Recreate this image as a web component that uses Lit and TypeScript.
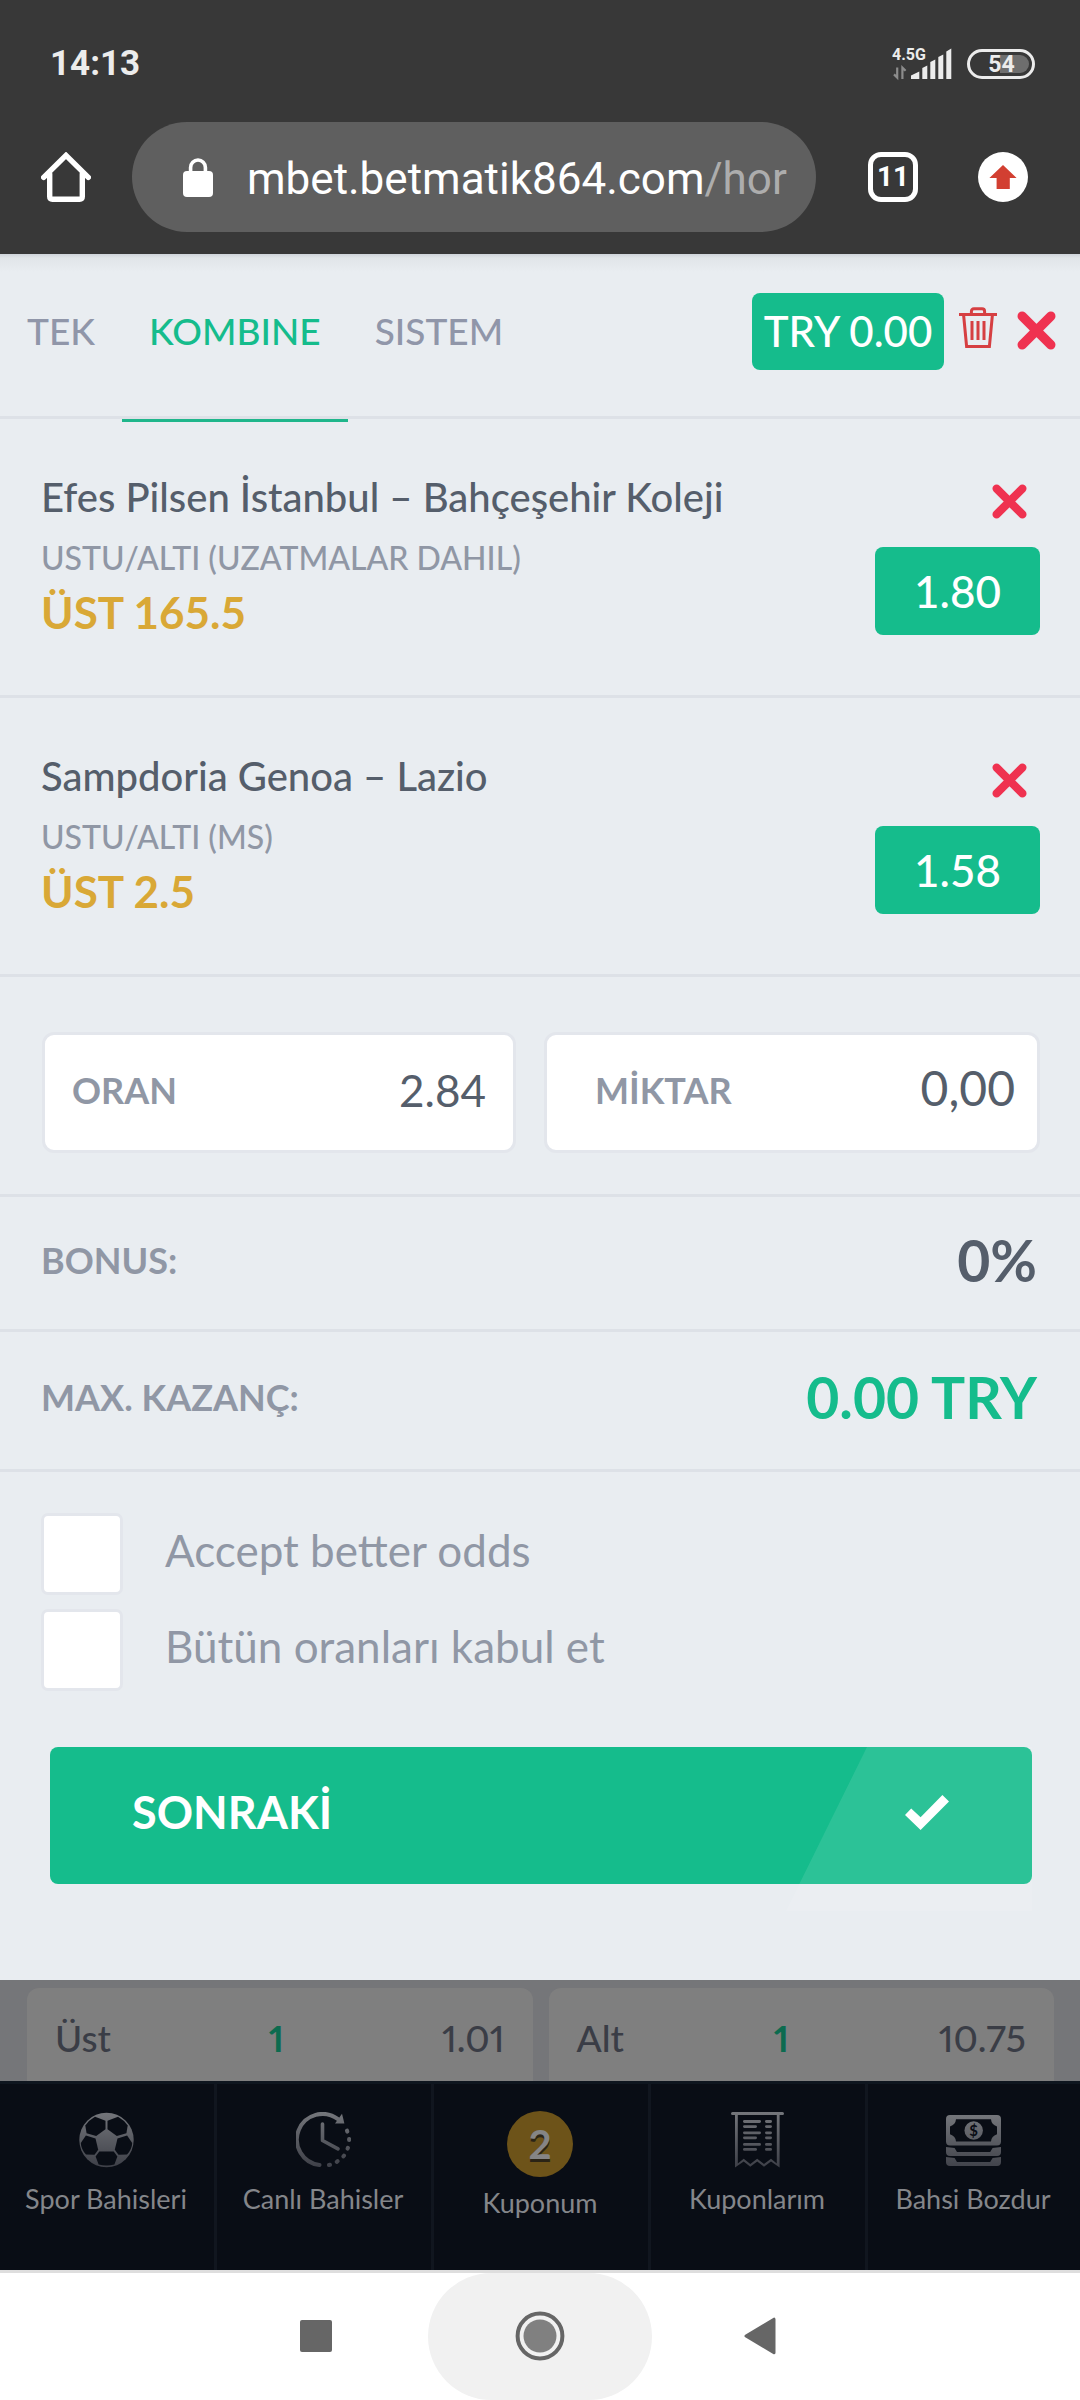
import { LitElement, html, svg, css } from "lit";
import { customElement, property, state } from "lit/decorators.js";

interface Selection {
  match: string;
  market: string;
  pick: string;
  odds: string;
}

const SELECTIONS: Selection[] = [
  {
    match: "Efes Pilsen İstanbul – Bahçeşehir Koleji",
    market: "USTU/ALTI (UZATMALAR DAHIL)",
    pick: "ÜST 165.5",
    odds: "1.80",
  },
  {
    match: "Sampdoria Genoa – Lazio",
    market: "USTU/ALTI (MS)",
    pick: "ÜST 2.5",
    odds: "1.58",
  },
];

const cross = (size: number) => html`<svg width=${size} height=${size} viewBox="0 0 38 38" aria-hidden="true">
  <path d="M5 5 L33 33 M33 5 L5 33" fill="none" stroke="#ef3250" stroke-width="9" stroke-linecap="round" />
</svg>`;

const fade = (id: string) => svg`<linearGradient id=${id} x1="0" y1="0" x2="0" y2="55" gradientUnits="userSpaceOnUse">
  <stop offset="0" stop-color="#74767b" />
  <stop offset="1" stop-color="#3e4048" />
</linearGradient>`;

const ballIcon = html`<svg width="55" height="56" viewBox="0 0 55 56" aria-hidden="true">
  <defs>${fade("ball")}</defs>
  <circle cx="27.5" cy="28" r="27.2" fill="url(#ball)" />
  <g fill="#090d15">
    <path d="M26.5 8.7V17.3L17.2 24L7.6 21.3L6.3 13.6Q10 8 16 4.8Z" />
    <path d="M28.5 8.7V17.3L37.8 24L47.4 21.3L48.7 13.6Q45 8 39 4.8Z" />
    <path d="M6.9 23.6L16.5 26.6L19.2 37.7L15.5 42.7L7 42.6Q2 37 1.8 31Z" />
    <path d="M48.1 23.6L38.5 26.6L35.8 37.7L39.5 42.7L48 42.6Q53 37 53.2 31Z" />
    <path d="M20.3 39.6H34.7L38.4 44.6L35.4 52.6Q27.5 54.6 19.6 52.6L16.6 44.6Z" />
  </g>
</svg>`;

const liveIcon = html`<svg width="55" height="56" viewBox="0 0 55 56" aria-hidden="true">
  <defs>${fade("live")}</defs>
  <g fill="none" stroke="url(#live)" stroke-linecap="round" stroke-linejoin="round">
    <path d="M23.5 53A25.6 25.6 0 1 1 42 7.2" stroke-width="4" />
    <path d="M26.5 12V28.5L42 36.8" stroke-width="3.6" />
    <path d="M51 18.6L51.3 19.6M53.1 27V28M51.9 35.8L51.6 36.6M48 43.6L47.4 44.4M41.6 49.2L40.8 49.8M34 52.8L33 53" stroke-width="4" />
  </g>
  <path d="M39 11.4L48.4 11.4L46 1.8Z" fill="url(#live)" />
</svg>`;

const receiptIcon = html`<svg width="53" height="56" viewBox="0 0 53 56" aria-hidden="true">
  <defs>${fade("receipt")}</defs>
  <g fill="url(#receipt)">
    <rect x="0" y="0" width="53" height="3" rx="1.5" />
    <path d="M4 2H6.8V51.4L12.7 46.8L19.3 51.9L26.2 46.8L33 51.9L40 46.8L45.8 51.4V2H48.6V55.6L40 49.4L33 54.8L26.2 49.4L19.3 54.8L12.7 49.4L4 55.6Z" />
    ${[9.5, 14.6, 20.8, 25.8, 32.4, 37.4].map(
      (y, i) => svg`<rect x="12" y=${y - 1.4} width=${i % 2 ? 14 : 18} height="2.8" rx="1.4" />
        <rect x="34" y=${y - 1.4} width="7" height="2.8" rx="1.4" />`,
    )}
  </g>
</svg>`;

const moneyIcon = html`<svg width="55" height="56" viewBox="0 -3 55 56" aria-hidden="true">
  <defs>${fade("money")}</defs>
  <g fill="url(#money)">
    <path fill-rule="evenodd" d="M4 0H51Q55 0 55 4V26.6Q55 30.6 51 30.6H4Q0 30.6 0 26.6V4Q0 0 4 0ZM10 4.3Q9.6 9.6 4 11.4V19.2Q9.6 21 10 26.4H45Q45.4 21 51 19.2V11.4Q45.4 9.6 45 4.3Z" />
    <circle cx="27.7" cy="15.5" r="9.2" />
    <path d="M0 32L8.6 33L11 37H44.2L46.6 33L55 32V37Q55 41 51 41H4Q0 41 0 37Z" />
    <path d="M0 42L8.6 43L11 47H44.2L46.6 43L55 42V47Q55 51 51 51H4Q0 51 0 47Z" />
  </g>
  <text x="27.7" y="21" text-anchor="middle" fill="#090d15" font-family="Lato, sans-serif" font-weight="700" font-size="15">$</text>
</svg>`;

@customElement("phone-header")
export class PhoneHeader extends LitElement {
  static styles = css`
    :host {
      display: block;
      background: #383838;
      color: #fff;
      font-family: Roboto, sans-serif;
    }
    .status {
      display: flex;
      align-items: center;
      justify-content: space-between;
      height: 122px;
      padding: 5px 45px 0 50px;
      box-sizing: border-box;
      color: #ececec;
    }
    .time {
      font-size: 35px;
      line-height: 40px;
      font-weight: 700;
    }
    .indicators {
      display: flex;
      align-items: center;
      gap: 15px;
    }
    .toolbar {
      display: flex;
      align-items: center;
      padding: 0 52px 22px 41px;
    }
    button {
      display: flex;
      align-items: center;
      padding: 0;
      border: 0;
      background: none;
      color: inherit;
      font: inherit;
    }
    .address {
      flex: 1;
      min-width: 0;
      height: 110px;
      margin: 0 52px 0 41px;
      padding: 0 24px 0 51px;
      border-radius: 55px;
      background: #5f5f5f;
      gap: 34px;
    }
    .url {
      overflow: hidden;
      padding-top: 3px;
      white-space: nowrap;
      font-size: 44px;
      line-height: 52px;
    }
    .path {
      color: #adadad;
    }
    .count {
      justify-content: center;
      box-sizing: border-box;
      width: 50px;
      height: 50px;
      margin-right: 60px;
      border: 5px solid #fff;
      border-radius: 13px;
      font-size: 28px;
      line-height: 32px;
      font-weight: 700;
    }
  `;

  render() {
    return html`
      <div class="status">
        <span class="time">14:13</span>
        <div class="indicators">
          <svg width="60" height="44" viewBox="0 -6 60 44" role="img" aria-label="Sinyal">
            <text x="0" y="12" fill="#ececec" font-family="Roboto, sans-serif" font-weight="700" font-size="16">4.5G</text>
            <path d="M19 31V27.6L27.3 23.4V31ZM30.3 31V20L35.3 17.6V31ZM38.3 31V14L43.3 11.6V31ZM46.3 31V9L51.3 6.6V31ZM54.3 31V3.4L59.3 .6V31Z" fill="#ececec" />
            <path d="M2 26.4L5.2 29.6V19.4M13.6 22.8L10.4 19.6V31" fill="none" stroke="#8c8c8c" stroke-width="2.2" />
          </svg>
          <svg width="68" height="32" viewBox="0 0 68 32" role="img" aria-label="Pil">
            <path d="M33 7H53A9 9 0 0 1 53 25H33Z" fill="#6e6e6e" />
            <rect x="1.5" y="2.5" width="65" height="27" rx="13.5" fill="none" stroke="#ececec" stroke-width="3" />
            <text x="34.5" y="24.4" text-anchor="middle" fill="#ececec" font-family="Roboto, sans-serif" font-weight="700" font-size="23">54</text>
          </svg>
        </div>
      </div>
      <div class="toolbar">
        <button aria-label="Ana sayfa">
          <svg width="50" height="50" viewBox="0 0 50 50" fill="none" stroke="#fff" stroke-width="5.4" stroke-linecap="round">
            <path d="M2.7 25.4L25 3.4L47.3 25.4" />
            <path d="M8.7 22V44.5Q8.7 47.2 11.4 47.2H38.6Q41.3 47.2 41.3 44.5V22" />
          </svg>
        </button>
        <button class="address" aria-label="Adres çubuğu">
          <svg width="30" height="39" viewBox="0 0 30 39">
            <rect y="13" width="30" height="26" rx="4" fill="#fff" />
            <path d="M7.6 15V9.4A7.4 7.4 0 0 1 22.4 9.4V15" fill="none" stroke="#fff" stroke-width="3.6" />
          </svg>
          <span class="url">mbet.betmatik864.com<span class="path">/hor</span></span>
        </button>
        <button class="count" aria-label="Sekmeler">11</button>
        <button aria-label="Güncelle">
          <svg width="50" height="50" viewBox="0 0 50 50">
            <circle cx="25" cy="25" r="25" fill="#fff" />
            <path d="M25 13L38.6 26H31.8V37H18.6V26H11.4Z" fill="#d23f31" />
          </svg>
        </button>
      </div>
    `;
  }
}

@customElement("slip-selection")
export class SlipSelection extends LitElement {
  @property({ attribute: false }) selection!: Selection;

  static styles = css`
    :host {
      display: flex;
      justify-content: space-between;
      padding: 54px 40px 55px 41px;
      border-bottom: 3px solid #dde1e7;
    }
    .info {
      display: flex;
      flex-direction: column;
    }
    .match {
      margin: 0 0 17px;
      font-size: 40px;
      line-height: 48px;
      font-weight: 500;
      color: #555e6b;
    }
    .market {
      margin: 0 0 6px;
      font-size: 32px;
      line-height: 40px;
      font-weight: 500;
      color: #9097a5;
    }
    .pick {
      margin: 0;
      font-size: 44px;
      line-height: 56px;
      font-weight: 700;
      color: #d9a836;
    }
    .side {
      display: flex;
      flex-direction: column;
      align-items: flex-end;
      gap: 28px;
      padding-top: 11px;
    }
    .remove {
      display: flex;
      margin-right: 13px;
      padding: 0;
      border: 0;
      background: none;
    }
    .odds {
      width: 165px;
      border-radius: 8px;
      background: #15bc8c;
      color: #fff;
      text-align: center;
      font-size: 44px;
      line-height: 88px;
      font-weight: 500;
    }
  `;

  render() {
    const s = this.selection;
    return html`
      <div class="info">
        <h2 class="match">${s.match}</h2>
        <p class="market">${s.market}</p>
        <p class="pick">${s.pick}</p>
      </div>
      <div class="side">
        <button class="remove" aria-label="Kaldır">${cross(35)}</button>
        <span class="odds">${s.odds}</span>
      </div>
    `;
  }
}

@customElement("app-root")
export class AppRoot extends LitElement {
  @state() private tab = "KOMBINE";

  static styles = css`
    :host {
      display: flex;
      flex-direction: column;
      min-height: 100vh;
      background: #757679;
      font-family: Lato, "Liberation Sans", sans-serif;
    }
    button {
      padding: 0;
      border: 0;
      background: none;
      font: inherit;
    }
    .slip {
      background: #e9edf1;
    }
    .head {
      display: flex;
      align-items: stretch;
      justify-content: space-between;
      height: 165px;
      padding-right: 24px;
      box-shadow: inset 0 -3px #dde1e7;
      background: linear-gradient(#cfd4da, #e1e5e9 4px, #e9edf1 18px);
    }
    .tabs {
      display: flex;
    }
    .tab {
      padding: 0 27px 11px;
      font-size: 37px;
      font-weight: 500;
      line-height: 48px;
      color: #9096a9;
    }
    .tab[aria-selected="true"] {
      color: #15bc8c;
      box-shadow: 0 3px #1fb68b;
    }
    .tools {
      display: flex;
      align-items: center;
      padding-bottom: 10px;
    }
    .balance {
      width: 192px;
      border-radius: 8px;
      background: #15bc8c;
      color: #fff;
      text-align: center;
      font-size: 42px;
      line-height: 77px;
      font-weight: 500;
    }
    .trash {
      display: flex;
      margin: 0 20px 8px 15px;
    }
    .close {
      display: flex;
      padding-bottom: 3px;
    }
    .stake {
      display: grid;
      grid-template-columns: 474fr 496fr;
      gap: 28px;
      padding: 55px 40px 41px 42px;
      border-bottom: 3px solid #dde1e7;
    }
    .field {
      display: flex;
      align-items: center;
      justify-content: space-between;
      min-width: 0;
      box-sizing: border-box;
      height: 121px;
      padding: 0 27px 5px;
      border: 3px solid #e3e6ec;
      border-radius: 12px;
      background: #fff;
      color: #555e6b;
      font-size: 44px;
      line-height: 56px;
    }
    .amount {
      padding: 0 22px 6px 48px;
      font-size: 48px;
    }
    .caption {
      font-size: 36px;
      line-height: 48px;
      font-weight: 700;
      color: #9097a5;
    }
    .entry {
      flex: 1;
      min-width: 0;
      width: 0;
      padding: 0 0 4px;
      border: 0;
      background: none;
      color: inherit;
      font: inherit;
      text-align: right;
      outline: none;
    }
    .row {
      display: flex;
      align-items: center;
      justify-content: space-between;
      padding: 31px 43px 37px 41px;
      border-bottom: 3px solid #dde1e7;
    }
    .win {
      padding: 33px 43px 40px 41px;
    }
    .value {
      font-size: 57px;
      line-height: 64px;
      font-weight: 700;
      color: #555e6b;
    }
    .win .value {
      color: #15bc8c;
    }
    .options {
      display: flex;
      flex-direction: column;
      gap: 14px;
      padding: 41px 41px 56px;
    }
    .option {
      display: flex;
      align-items: center;
      gap: 42px;
      color: #9097a5;
      font-size: 44px;
      line-height: 48px;
    }
    .option span {
      padding-bottom: 8px;
    }
    .box {
      appearance: none;
      box-sizing: border-box;
      width: 82px;
      height: 82px;
      margin: 0;
      border: 3px solid #e3e6ec;
      border-radius: 7px;
      background: #fff;
    }
    .box:checked {
      background: #15bc8c;
    }
    .action {
      position: relative;
      padding: 0 48px 96px 50px;
    }
    .next {
      display: flex;
      align-items: center;
      justify-content: space-between;
      box-sizing: border-box;
      width: 100%;
      height: 137px;
      padding: 0 83px 7px 82px;
      border-radius: 8px;
      background: #15bc8c;
      color: #fff;
      font-size: 45px;
      line-height: 56px;
      font-weight: 700;
    }
    .action::after {
      content: "";
      position: absolute;
      top: 0;
      right: 48px;
      width: 246px;
      height: 164px;
      background: rgb(255 255 255 / 0.1);
      clip-path: polygon(81px 0, 100% 0, 100% 100%, 0 100%);
      pointer-events: none;
    }
    .market {
      flex: 1;
      display: grid;
      grid-template-columns: 1fr 1fr;
      gap: 16px;
      padding: 8px 26px 0 27px;
    }
    .outcome {
      display: flex;
      justify-content: space-between;
      padding: 26px 28px 0;
      border-radius: 12px 12px 0 0;
      background: #7f7f7f;
      color: #3a3d46;
      font-size: 37px;
      line-height: 48px;
      font-weight: 500;
      font-variant-numeric: proportional-nums;
    }
    .outcome b {
      color: #0c6b4f;
    }
    .nav {
      display: grid;
      grid-template-columns: repeat(4, 217fr) 212fr;
      height: 189px;
      box-sizing: border-box;
      border-top: 3px solid #0f161f;
      background: #090d15;
    }
    .link {
      display: flex;
      flex-direction: column;
      align-items: center;
      min-width: 0;
      padding: 28px 2px 0 0;
      gap: 15px;
      border-right: 3px solid #11161f;
      color: #84868a;
      text-decoration: none;
      white-space: nowrap;
      font-size: 27px;
      line-height: 32px;
    }
    .link:last-child {
      border-right: 0;
    }
    .current {
      padding-top: 27px;
      gap: 10px;
    }
    .badge {
      width: 66px;
      border-radius: 33px;
      background: #6d5319;
      color: #858585;
      text-align: center;
      font-size: 40px;
      line-height: 66px;
      font-weight: 700;
      text-shadow: 0 3px #2b2416;
    }
    .system {
      display: grid;
      grid-template-columns: 1fr 224px 1fr;
      height: 130px;
      box-sizing: border-box;
      border-top: 3px solid #dedede;
      background: #fff;
    }
    .key {
      display: flex;
      align-items: center;
      justify-content: flex-end;
      padding: 0 96px 2px 0;
    }
    .home {
      justify-content: center;
      padding: 0 0 2px;
      border-radius: 64px;
      background: #f1f1f1;
    }
    .back {
      justify-content: flex-start;
      padding: 0 0 2px 92px;
    }
  `;

  render() {
    return html`
      <phone-header></phone-header>
      <main class="slip">
        <div class="head">
          <div class="tabs" role="tablist">
            ${["TEK", "KOMBINE", "SISTEM"].map(
              (name) => html`<button class="tab" role="tab" aria-selected=${String(name === this.tab)} @click=${() => (this.tab = name)}>${name}</button>`,
            )}
          </div>
          <div class="tools">
            <button class="balance">TRY 0.00</button>
            <button class="trash" aria-label="Kuponu temizle">
              <svg width="38" height="41" viewBox="0 0 38 41" fill="none" stroke="#d63f42" stroke-width="3">
                <path d="M0 7.5H38M12.4 7V4.4Q12.4 1.8 15 1.8H23Q25.6 1.8 25.6 4.4V7M4.6 8L7.6 39.4H30.4L33.4 8M13 14V33M19 14V33M25 14V33" />
              </svg>
            </button>
            <button class="close" aria-label="Kapat">${cross(39)}</button>
          </div>
        </div>
        ${SELECTIONS.map((s) => html`<slip-selection .selection=${s}></slip-selection>`)}
        <div class="stake">
          <div class="field"><span class="caption">ORAN</span><span>2.84</span></div>
          <div class="field amount">
            <label class="caption" for="amount">MİKTAR</label>
            <input class="entry" id="amount" inputmode="decimal" value="0,00" />
          </div>
        </div>
        <div class="row"><span class="caption">BONUS:</span><span class="value">0%</span></div>
        <div class="row win"><span class="caption">MAX. KAZANÇ:</span><span class="value">0.00 TRY</span></div>
        <div class="options">
          <label class="option"><input class="box" type="checkbox" /><span>Accept better odds</span></label>
          <label class="option"><input class="box" type="checkbox" /><span>Bütün oranları kabul et</span></label>
        </div>
        <div class="action">
          <button class="next">
            SONRAKİ
            <svg width="44" height="35" viewBox="0 0 44 35" aria-hidden="true">
              <path d="M0 20L6.2 13.4L15.6 22.2L37.4 0L44 6.6L15.6 35Z" fill="#fff" />
            </svg>
          </button>
        </div>
      </main>
      <section class="market">
        <div class="outcome"><span>Üst</span><b>1</b><span>1.01</span></div>
        <div class="outcome"><span>Alt</span><b>1</b><span>10.75</span></div>
      </section>
      <nav class="nav">
        <a class="link" href="#spor">${ballIcon}<span>Spor Bahisleri</span></a>
        <a class="link" href="#canli">${liveIcon}<span>Canlı Bahisler</span></a>
        <a class="link current" href="#kupon"><span class="badge">2</span><span>Kuponum</span></a>
        <a class="link" href="#kuponlar">${receiptIcon}<span>Kuponlarım</span></a>
        <a class="link" href="#bozdur">${moneyIcon}<span>Bahsi Bozdur</span></a>
      </nav>
      <div class="system">
        <button class="key" aria-label="Son uygulamalar">
          <svg width="32" height="32" viewBox="0 0 32 32"><rect width="32" height="32" rx="2" fill="#666" /></svg>
        </button>
        <button class="key home" aria-label="Ana ekran">
          <svg width="50" height="50" viewBox="0 0 50 50">
            <circle cx="25" cy="25" r="22.4" fill="none" stroke="#666" stroke-width="4" />
            <circle cx="25" cy="25" r="16.5" fill="#808080" />
          </svg>
        </button>
        <button class="key back" aria-label="Geri">
          <svg width="32" height="38" viewBox="0 0 32 38"><path d="M2 19L30 2.2V35.8Z" fill="#666" stroke="#666" stroke-width="3" stroke-linejoin="round" /></svg>
        </button>
      </div>
    `;
  }
}
